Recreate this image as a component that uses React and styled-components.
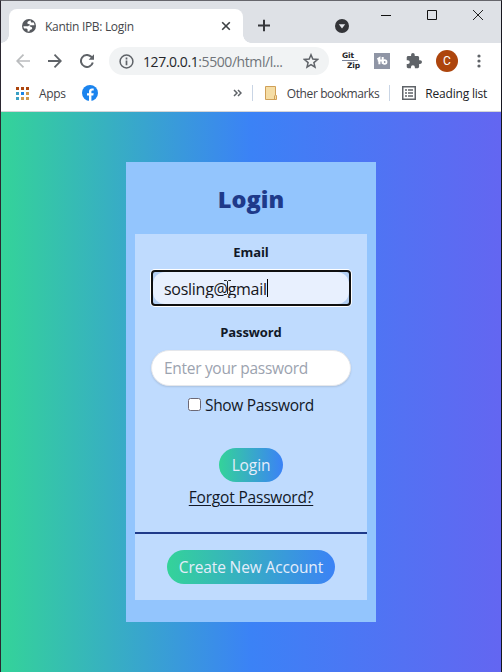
import React from "react";
import styled, { createGlobalStyle, css } from "styled-components";

const Global = createGlobalStyle`
  * { box-sizing: border-box; }
  html, body { margin: 0; padding: 0; overflow: hidden; }
  body { font-family: "Open Sans", "Noto Sans", sans-serif; color: #111827; }
  svg { display: block; flex: none; }
`;

const Window = styled.div`
  width: 502px;
  height: 672px;
  display: flex;
  flex-direction: column;
  background: #fff;
  border-top: 1px solid #66666c;
  border-left: 1px solid #2b2730;
  border-right: 1px solid #17171f;
`;

const TabStrip = styled.header`
  height: 42px;
  flex: none;
  display: flex;
  background: #dee1e6;
`;

const Tab = styled.div`
  position: relative;
  width: 234px;
  height: 34px;
  margin: 8px 0 0 8px;
  padding: 0 11px 0 13px;
  display: flex;
  align-items: center;
  background: #fff;
  border-radius: 8px 8px 0 0;
  &::before, &::after {
    content: "";
    position: absolute;
    bottom: 0;
    width: 8px;
    height: 8px;
  }
  &::before { left: -8px; background: radial-gradient(circle at 0 0, #dee1e6 7.5px, #fff 8px); }
  &::after { right: -8px; background: radial-gradient(circle at 100% 0, #dee1e6 7.5px, #fff 8px); }
`;

const TabTitle = styled.span`
  flex: 1;
  margin-left: 9px;
  font-size: 12px;
  letter-spacing: -0.32px;
  color: #45474b;
  white-space: nowrap;
`;

const NewTab = styled.div`
  margin: 18px 0 0 15px;
`;

const TabSearch = styled.div`
  margin: 18px 0 0 65px;
`;

const WindowControls = styled.div`
  display: flex;
  gap: 36px;
  margin: 9px 0 0 32px;
`;

const Toolbar = styled.div`
  height: 36px;
  flex: none;
  display: flex;
  align-items: center;
  padding: 0 12px 0 15px;
`;

const NavButtons = styled.div`
  display: flex;
  gap: 18px;
  width: 93px;
`;

const AddressBar = styled.div`
  width: 220px;
  height: 28px;
  display: flex;
  align-items: center;
  padding: 0 10px;
  border-radius: 14px;
  background: #f1f3f4;
`;

const Url = styled.span`
  flex: 1;
  margin-left: 9px;
  font-size: 14px;
  letter-spacing: -0.42px;
  color: #70757a;
  white-space: nowrap;
`;

const Host = styled.span`
  color: #24262a;
`;

const Extensions = styled.div`
  flex: 1;
  display: flex;
  align-items: center;
  margin-left: 13px;
`;

const GitZip = styled.div`
  width: 18px;
  height: 18px;
  display: flex;
  flex-direction: column;
  justify-content: space-between;
  font: bold 7.5px/8px "DejaVu Sans", sans-serif;
  letter-spacing: -0.1px;
  color: #252529;
  background: linear-gradient(#7b8498, #7b8498) 0 8px / 16px 1px no-repeat;
`;

const GitLine = styled.div`
  height: 8px;
`;

const ZipLine = styled.div`
  text-align: right;
  height: 8px;
`;

const StudioBadge = styled.div`
  width: 16px;
  height: 16px;
  margin-left: 14px;
  background: #8f95a5;
`;

const PuzzleSlot = styled.div`
  margin-left: 16px;
`;

const Avatar = styled.div`
  width: 22px;
  height: 22px;
  margin: 0 19px 0 14px;
  border-radius: 50%;
  background: #ad450d;
  color: #fff;
  font: 12px/22px Roboto, sans-serif;
  text-align: center;
`;

const BookmarkBar = styled.div`
  height: 33px;
  flex: none;
  display: flex;
  align-items: center;
  padding: 0 13px 4px 15px;
  border-bottom: 1px solid #d5d5d7;
  font-size: 12px;
  color: #3f4247;
  white-space: nowrap;
`;

const BookmarkLabel = styled.span`
  margin-left: ${(p) => p.$gap}px;
  letter-spacing: ${(p) => p.$track || 0}px;
  ${(p) => p.$dark && css`color: #202226;`}
`;

const AppGrid = styled.div`
  display: grid;
  grid-template-columns: repeat(3, 3px);
  gap: 2px;
`;

const AppDot = styled.i`
  width: 3px;
  height: 3px;
  background: ${(p) => p.$color};
`;

const Slot = styled.div`
  margin-left: ${(p) => p.$gap}px;
`;

const Divider = styled.div`
  width: 1px;
  height: 16px;
  margin-left: ${(p) => p.$gap}px;
  background: #c9d5e5;
`;

const Page = styled.main`
  flex: 1;
  padding: 50px 0 0 125px;
  background: linear-gradient(to right, #34d399, #3b82f6, #6366f1);
`;

const Card = styled.section`
  width: 250px;
  height: 460px;
  padding: 0 9px;
  background: #93c5fd;
`;

const Title = styled.h1`
  height: 72px;
  margin: 0;
  padding-top: 1px;
  font-size: 23.5px;
  line-height: 72px;
  font-weight: 800;
  text-align: center;
  color: #1e3a8a;
`;

const Form = styled.form`
  height: 300px;
  display: flex;
  flex-direction: column;
  align-items: center;
  background: #bfdbfe;
  border-bottom: 2px solid #1e3a8a;
`;

const Label = styled.label`
  height: 36px;
  flex: none;
  font-size: 13px;
  line-height: 36px;
  font-weight: 700;
  letter-spacing: -0.1px;
`;

const FocusRing = styled.div`
  width: 200px;
  height: 36px;
  flex: none;
  margin-bottom: 8px;
  border: 2px solid #101010;
  border-radius: 4px;
  box-shadow: 0 0 0 1px #fff;
  background: #b4cff2;
`;

const EmailField = styled.div`
  position: relative;
  height: 32px;
  padding: 0 11px;
  display: flex;
  align-items: center;
  border-radius: 12px;
  background: #e8f0fe;
`;

const EmailValue = styled.span`
  height: 20px;
  padding-top: 1px;
  overflow: hidden;
  font-size: 16px;
  line-height: 20px;
  letter-spacing: -0.27px;
  color: #15151a;
`;

const Caret = styled.i`
  width: 1px;
  height: 18px;
  background: #000;
`;

const Pointer = styled.svg`
  position: absolute;
  left: 70px;
  top: 7px;
`;

const PasswordField = styled.input`
  width: 200px;
  height: 36px;
  flex: none;
  padding: 0 12px;
  border: 1px solid #e5e7eb;
  border-radius: 18px;
  outline: 0;
  box-shadow: 0 1px 2px rgba(0, 0, 0, 0.12);
  background: #fff;
  font: 15.5px "Open Sans", sans-serif;
  letter-spacing: -0.3px;
  color: #111827;
  &::placeholder { color: #9ca3af; opacity: 1; }
`;

const CheckRow = styled.label`
  height: 24px;
  flex: none;
  display: flex;
  align-items: center;
  margin: 7px 0 31px;
  font-size: 15.5px;
  letter-spacing: -0.33px;
`;

const Check = styled.input`
  appearance: none;
  width: 13px;
  height: 13px;
  margin: 0 4px 2px 0;
  border: 1px solid #6c6875;
  border-radius: 2.5px;
  background: #fff;
`;

const Pill = styled.button`
  width: ${(p) => p.$width}px;
  height: 34px;
  flex: none;
  padding: 0;
  border: 0;
  border-radius: 17px;
  background: linear-gradient(to right, #34d399, #3b82f6);
  color: #e5edfb;
  font: 15.5px/34px "Open Sans", sans-serif;
  letter-spacing: ${(p) => p.$track}px;
  white-space: nowrap;
`;

const Forgot = styled.a`
  margin-top: 3px;
  font-size: 15.5px;
  line-height: 24px;
  letter-spacing: -0.19px;
  text-decoration: underline;
  text-decoration-thickness: 1px;
  text-underline-offset: 2px;
`;

const SignUp = styled.div`
  height: 66px;
  display: flex;
  justify-content: center;
  align-items: center;
  background: #bfdbfe;
`;

const dots = ["#ad450d", "#ad450d", "#ad450d", "#3aa0c4", "#1b84e8", "#cf9850", "#3aa0c4", "#cf9850", "#cf9850"];

const line = { fill: "none", stroke: "#5f6368", strokeWidth: 2 };

export default function App() {
  return (
    <Window>
      <Global />
      <TabStrip>
        <Tab>
          <svg width="14" height="14" viewBox="0 0 14 14">
            <circle cx="7" cy="7" r="7" fill="#56595e" />
            <path d="M8.8 1.6C7 1.8 5.3 2.700 5.300 4c0 1.200 2.400.7 2.600 1.800.1.800-1.500.8-1.700 1.500H1.400c.1 1 .3 1.500.7 2.200h2.200c1 0 1.300.8 1.300 1.700v1.200c.6.2 1.200.2 1.800.1.100-1.200.5-2 1.700-2.100 1-.1 1.300-1 .9-1.900-.5-1-2-.7-2.400-1.500-.2-.6.8-.8 2.300-.7h2.600c0-1.200-.5-2.400-1.200-3.100-.9.600-2.200.5-2.500-.3z" fill="#fff" />
          </svg>
          <TabTitle>Kantin IPB: Login</TabTitle>
          <svg width="12" height="12" viewBox="0 0 12 12"><path d="m2.2 2.2 7.6 7.6m0-7.6-7.6 7.6" stroke="#3c4043" strokeWidth="1.6" /></svg>
        </Tab>
        <NewTab><svg width="12" height="13" viewBox="0 0 12 13"><path d="M6 .8v11.4M0 6.5h12" stroke="#35363a" strokeWidth="2" /></svg></NewTab>
        <TabSearch>
          <svg width="14" height="14" viewBox="0 0 14 14"><circle cx="7" cy="7" r="7" fill="#333438" /><path d="M3.8 5.2h6.4L7 9.4z" fill="#e3e5ea" /></svg>
        </TabSearch>
        <WindowControls>
          <svg width="10" height="10"><path d="M0 5.5h10" stroke="#111" /></svg>
          <svg width="10" height="10"><path d="M.5.5h9v9h-9z" fill="none" stroke="#111" /></svg>
          <svg width="10" height="10"><path d="m0 0 10 10M10 0 0 10" stroke="#222" /></svg>
        </WindowControls>
      </TabStrip>

      <Toolbar>
        <NavButtons>
          <svg width="14" height="14" viewBox="0 0 14 14"><path d="M14 7H1.5M7.5.7 1.2 7l6.3 6.3" fill="none" stroke="#babcbe" strokeWidth="1.7" /></svg>
          <svg width="14" height="14" viewBox="0 0 14 14"><path d="M0 7h12.5M6.5.7 12.8 7l-6.3 6.3" {...line} strokeWidth="1.8" /></svg>
          <svg width="14" height="14" viewBox="0 0 14 14"><path d="M12.8 8.5A6 6 0 1 1 11.3 2.8L12.3 3.8" {...line} /><path d="M14 .3v5.4H8.6z" fill="#5f6368" /></svg>
        </NavButtons>
        <AddressBar>
          <svg width="15" height="15" viewBox="0 0 15 15"><circle cx="7.5" cy="7.5" r="6.4" {...line} strokeWidth="1.5" /><path d="M7.5 6.6v4.6M7.5 3.6v1.8" {...line} strokeWidth="1.7" /></svg>
          <Url><Host>127.0.0.1</Host>:5500/html/l...</Url>
          <svg width="16" height="16" viewBox="0 0 16 16"><path d="m8 1.8 1.8 4.3 4.7.4-3.6 3.1 1.1 4.6L8 11.7l-4 2.5 1.1-4.6-3.6-3.1 4.7-.4z" {...line} strokeWidth="1.5" /></svg>
        </AddressBar>
        <Extensions>
          <GitZip><GitLine>Git</GitLine><ZipLine>Zip</ZipLine></GitZip>
          <StudioBadge>
            <svg width="16" height="16" viewBox="0 0 16 16"><path d="m3.4 6.3 2-1.3v6.300M3.800 7.500h5M8.700 4v6.700" fill="none" stroke="#fff" strokeWidth="2" /><circle cx="10.600" cy="9" r="1.900" fill="none" stroke="#fff" strokeWidth="1.800" /></svg>
          </StudioBadge>
          <PuzzleSlot>
            <svg width="16" height="16" viewBox="1 1 22 22"><path fill="#5f6368" d="M20.5 11H19V7c0-1.1-.9-2-2-2h-4V3.5a2.5 2.5 0 0 0-5 0V5H4c-1.1 0-2 .9-2 2v3.8h1.500a2.700 2.700 0 0 1 0 5.400H2V20c0 1.1.9 2 2 2h3.8v-1.500a2.700 2.700 0 0 1 5.400 0V22H17c1.1 0 2-.9 2-2v-4h1.500a2.500 2.500 0 0 0 0-5z" /></svg>
          </PuzzleSlot>
          <Avatar>C</Avatar>
          <svg width="4" height="14" viewBox="0 0 4 14" fill="#5f6368"><circle cx="2" cy="2" r="1.6" /><circle cx="2" cy="7" r="1.6" /><circle cx="2" cy="12" r="1.6" /></svg>
        </Extensions>
      </Toolbar>

      <BookmarkBar>
        <AppGrid>{dots.map((c, i) => <AppDot key={i} $color={c} />)}</AppGrid>
        <BookmarkLabel $gap={10} $track={-0.3}>Apps</BookmarkLabel>
        <Slot $gap={16}>
          <svg width="16" height="16" viewBox="0 0 16 16"><circle cx="8" cy="8" r="8" fill="#1b84ee" /><path d="M7 16v-5.5H5V8.2h2V6.5c0-2 1.2-3.1 3-3.1l1.7.1v2h-1c-1 0-1.3.5-1.3 1.2v1.5h2.3l-.4 2.3H9.400V16z" fill="#fff" /></svg>
        </Slot>
        <Slot $gap={135}>
          <svg width="9" height="8" viewBox="0 0 9 8"><path d="m1 1 3 3-3 3m4-6 3 3-3 3" {...line} strokeWidth="1.5" /></svg>
        </Slot>
        <Divider $gap={10} />
        <Slot $gap={12}>
          <svg width="12" height="14" viewBox="0 0 12 14"><path d="M.5.5h10v9h1v4H.5z" fill="#f5dda5" stroke="#d0a058" /><path d="M9.5 9.5v4" stroke="#d0a058" /></svg>
        </Slot>
        <BookmarkLabel $gap={10} $track={-0.4}>Other bookmarks</BookmarkLabel>
        <Divider $gap={10} />
        <Slot $gap={12}>
          <svg width="14" height="14" viewBox="0 0 14 14"><path d="M.75.75h12.5v12.5H.75z" {...line} strokeWidth="1.5" /><path d="M3 4h2m1 0h5M3 7h2m1 0h5M3 10h2m1 0h5" {...line} strokeWidth="1.3" /></svg>
        </Slot>
        <BookmarkLabel $gap={9} $track={-0.2} $dark>Reading list</BookmarkLabel>
      </BookmarkBar>

      <Page>
        <Card>
          <Title>Login</Title>
          <Form>
            <Label>Email</Label>
            <FocusRing>
              <EmailField>
                <EmailValue>sosling@gmail</EmailValue>
                <Caret />
                <Pointer width="9" height="17" viewBox="0 0 9 17"><path d="M1 1.5h2.5l1 1 1-1H8M4.5 2.5v12M1 15.5h2.5l1-1 1 1H8" fill="none" stroke="#222" /></Pointer>
              </EmailField>
            </FocusRing>
            <Label>Password</Label>
            <PasswordField type="password" placeholder="Enter your password" />
            <CheckRow><Check type="checkbox" />Show Password</CheckRow>
            <Pill type="button" $width={64} $track={-0.1}>Login</Pill>
            <Forgot>Forgot Password?</Forgot>
          </Form>
          <SignUp><Pill type="button" $width={168} $track={-0.13}>Create New Account</Pill></SignUp>
        </Card>
      </Page>
    </Window>
  );
}
